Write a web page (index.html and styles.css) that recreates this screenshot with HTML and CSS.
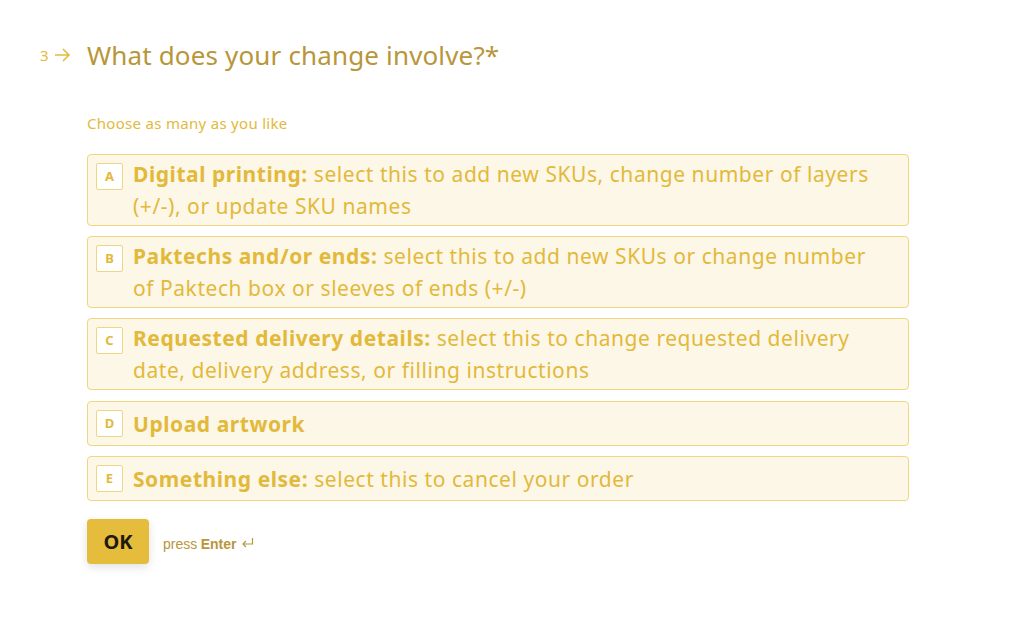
FILE: index.html
```html
<!DOCTYPE html>
<html>
<head>
<meta charset="utf-8">
<link rel="stylesheet" href="styles.css">
</head>
<body>
<main class="question">
  <div class="q-head">
    <div class="q-num"><span>3</span>
      <svg class="arrow" width="17" height="14" viewBox="0 0 17 14"><path d="M1 7h14.5M9 1l6 6-6 6" fill="none" stroke="currentColor" stroke-width="1.5"/></svg>
    </div>
    <h1 class="q-title">What does your change involve?*</h1>
  </div>
  <div class="q-body">
    <p class="hint">Choose as many as you like</p>
    <div class="options">
      <div class="option"><span class="key">A</span><span class="label"><b>Digital printing:</b> select this to add new SKUs, change number of layers (+/-), or update SKU names</span></div>
      <div class="option"><span class="key">B</span><span class="label"><b>Paktechs and/or ends:</b> select this to add new SKUs or change number of Paktech box or sleeves of ends (+/-)</span></div>
      <div class="option"><span class="key">C</span><span class="label"><b>Requested delivery details:</b> select this to change requested delivery date, delivery address, or filling instructions</span></div>
      <div class="option"><span class="key">D</span><span class="label"><b>Upload artwork</b></span></div>
      <div class="option"><span class="key">E</span><span class="label"><b>Something else:</b> select this to cancel your order</span></div>
    </div>
    <div class="actions">
      <button class="ok">OK</button>
      <span class="press">press <b>Enter</b>
        <svg class="enter" width="13" height="11" viewBox="0 0 13 11"><path d="M11.5 1v6H2M5 4L2 7l3 3" fill="none" stroke="currentColor" stroke-width="1.2"/></svg>
      </span>
    </div>
  </div>
</main>
</body>
</html>
```
FILE: styles.css
```css
html, body { margin: 0; padding: 0; background: #fff; }
body { font-family: "Noto Sans", sans-serif; width: 1024px; height: 625px; overflow: hidden; }
.question { padding: 38px 0 0 40px; }
.q-head { display: flex; align-items: center; }
.q-num { width: 47px; display: flex; align-items: center; gap: 5px; color: #E3B93B; font-size: 15px; }
.arrow { display: block; }
.q-title { margin: 0; font-weight: 400; font-size: 26px; line-height: 34px; color: #B8963A; letter-spacing: 0.15px; }
.q-body { padding-left: 47px; }
.hint { margin: 41px 0 21px; font-size: 15px; line-height: 20px; color: #E3B93B; letter-spacing: 0.3px; }
.options { width: 822px; display: flex; flex-direction: column; gap: 10px; }
.option { display: flex; align-items: flex-start; border: 1px solid #F0D680; border-radius: 4px; background: #FCF7E7; padding: 3px 8px; color: #E3B93B; font-size: 21px; line-height: 32px; letter-spacing: 0.55px; }
.option:nth-child(4) { margin-top: 1px; }
.key { flex: none; box-sizing: border-box; width: 27px; height: 27px; margin: 5px 10px 5px 0; border: 1px solid #F0D680; border-radius: 2px; background: #fff; font-size: 13px; font-weight: 700; line-height: 25px; text-align: center; letter-spacing: 0; }
.label { align-self: center; padding-right: 18px; }
.label b { font-weight: 700; }
.actions { display: flex; align-items: center; margin-top: 18px; gap: 14px; }
.ok { width: 62px; height: 45px; border: 0; border-radius: 4px; background: #E6BC3D; color: #1E1A0E; font-family: inherit; font-size: 20px; font-weight: 700; box-shadow: 0 3px 10px rgba(0,0,0,0.12); padding: 0; }
.press { font-family: "Liberation Sans", Arial, sans-serif; font-size: 14px; color: #B8963A; display: flex; align-items: center; gap: 4px; margin-top: 5px; }
.press b { margin-left: -0.5px; }
.enter { display: block; margin-top: -4px; }
```
